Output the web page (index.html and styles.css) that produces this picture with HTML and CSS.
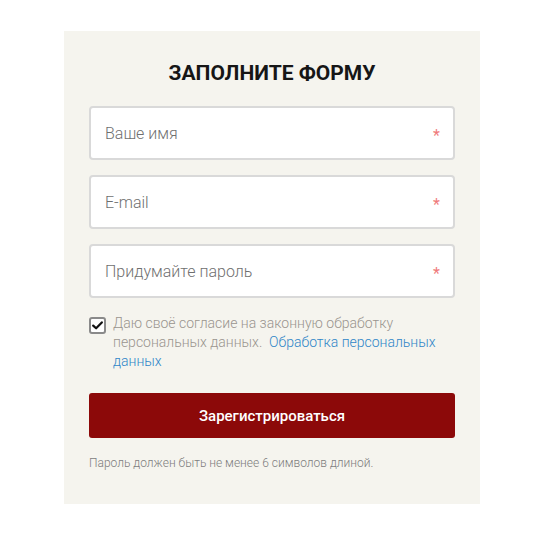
FILE: index.html
```html
<!DOCTYPE html>
<html lang="ru">
<head>
<meta charset="utf-8">
<link rel="stylesheet" href="styles.css">
</head>
<body>
<div class="card">
  <h2 class="title">ЗАПОЛНИТЕ ФОРМУ</h2>
  <div class="fields">
    <div class="field"><span class="ph">Ваше имя</span><span class="req">*</span></div>
    <div class="field"><span class="ph">E-mail</span><span class="req">*</span></div>
    <div class="field"><span class="ph">Придумайте пароль</span><span class="req">*</span></div>
  </div>
  <div class="consent">
    <span class="box"><svg width="11" height="9" viewBox="0 0 11 9"><path d="M1.2 4.6 L4.1 7.3 L9.8 1.4" fill="none" stroke="#111" stroke-width="2.2" stroke-linecap="round" stroke-linejoin="round"/></svg></span>
    <p class="consent-text">Даю своё согласие на законную обработку персональных данных. &nbsp;<a href="#" class="link">Обработка персональных данных</a></p>
  </div>
  <button class="btn">Зарегистрироваться</button>
  <p class="hint">Пароль должен быть не менее 6 символов длиной.</p>
</div>
</body>
</html>
```
FILE: styles.css
```css
html, body {
  margin: 0;
  padding: 0;
  background: #ffffff;
  font-family: Roboto, "Liberation Sans", sans-serif;
}
.card {
  box-sizing: border-box;
  width: 416px;
  margin: 31px 0 0 64px;
  padding: 30px 25px 33px;
  background: #f5f4ee;
}
.title {
  margin: 0;
  font-size: 21px;
  line-height: 24px;
  font-weight: 700;
  text-align: center;
  color: #161616;
}
.fields {
  margin-top: 21px;
  display: flex;
  flex-direction: column;
  gap: 15px;
}
.field {
  box-sizing: border-box;
  height: 54px;
  border: 2px solid #d9d9d9;
  border-radius: 4px;
  background: #fff;
  display: flex;
  align-items: center;
  justify-content: space-between;
  padding: 0 13px 0 14px;
}
.ph {
  font-size: 16px;
  font-weight: 300;
  color: #6f6f6f;
}
.req {
  color: #ef7b7b;
  font-size: 16px;
  margin-top: 4px;
}
.consent {
  margin-top: 16px;
  display: flex;
  align-items: flex-start;
  gap: 7px;
}
.box {
  box-sizing: border-box;
  flex: none;
  width: 17px;
  height: 17px;
  margin-top: 3px;
  border: 2px solid #8a8a8a;
  border-radius: 3px;
  background: #fff;
  display: flex;
  align-items: center;
  justify-content: center;
}
.consent-text {
  margin: 0;
  font-size: 14px;
  line-height: 19px;
  font-weight: 300;
  color: #9a948e;
}
.link {
  color: #2f86c8;
  text-decoration: none;
  font-weight: 300;
}
.btn {
  display: block;
  width: 100%;
  height: 45px;
  margin-top: 22px;
  border: none;
  border-radius: 3px;
  background: #8c0909;
  color: #fff;
  font-family: Roboto, "Liberation Sans", sans-serif;
  font-size: 15px;
  font-weight: 500;
}
.hint {
  margin: 17px 0 0;
  font-size: 12px;
  line-height: 16px;
  font-weight: 300;
  color: #7d7d7d;
}
```
